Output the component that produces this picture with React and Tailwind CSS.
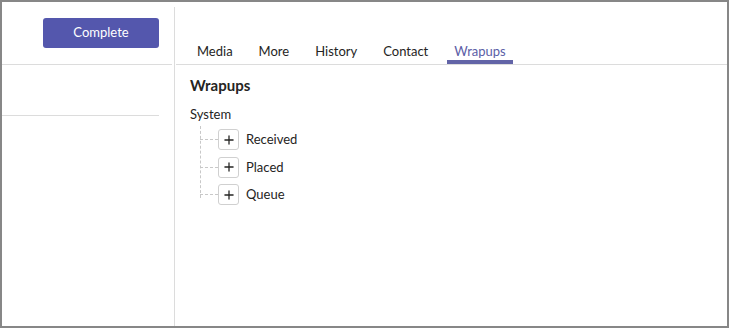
import { Plus } from "lucide-react"

const tabs = ["Media", "More", "History", "Contact", "Wrapups"]
const codes = ["Received", "Placed", "Queue"]

export default function App() {
  return (
    <div
      className="w-[729px] h-[328px] border-2 border-[#878787] bg-white flex text-[#252423]"
      style={{ fontFamily: "Lato, 'Noto Sans', sans-serif" }}
    >
      {/* Left column */}
      <div className="w-[172px] flex flex-col">
        <div className="h-[63px] flex justify-end items-start pt-[16px] pr-[13px] border-b border-[#dcdcdc] mr-[2px]">
          <button className="w-[116px] h-[30px] rounded-[3px] bg-[#5457ad] text-white text-[13px]">
            Complete
          </button>
        </div>
        <div className="h-[51px] border-b border-[#dcdcdc] mr-[15px]" />
      </div>

      {/* Divider */}
      <div className="w-px bg-[#dcdcdc] mt-[5px]" />

      {/* Right column */}
      <div className="flex-1 flex flex-col">
        <div className="h-[63px] ml-px border-b border-[#dcdcdc] flex items-end pl-[14px] gap-[12px]">
          {tabs.map((t) => {
            const active = t === "Wrapups"
            return (
              <div key={t} className="flex flex-col items-stretch">
                <span className={`px-[7px] text-[13px] leading-[18px] ${active ? "text-[#5b5ea6]" : "text-[#252423]"}`}>{t}</span>
                <span className={`mt-[0px] h-[4px] ${active ? "bg-[#6264a7]" : "bg-transparent"}`} />
              </div>
            )
          })}
        </div>

        <div className="pl-[15px] pt-[10px]">
          <h2 className="text-[15px] font-bold leading-[20px]">Wrapups</h2>
          <div className="mt-[10px] text-[13px] leading-[18px]">System</div>
          <div className="relative ml-[10px] mt-[3px]">
            <div className="absolute left-0 top-0 h-[72px] border-l border-dashed border-[#c8c8c8]" />
            {codes.map((c) => (
              <div key={c} className="h-[27.5px] flex items-center">
                <span className="w-[18px] border-t border-dashed border-[#c8c8c8]" />
                <span className="w-[21px] h-[21px] rounded-[3px] border border-[#d0d0d0] flex items-center justify-center">
                  <Plus size={14} strokeWidth={2.2} className="text-[#252423]" />
                </span>
                <span className="ml-[7px] text-[13px]">{c}</span>
              </div>
            ))}
          </div>
        </div>
      </div>
    </div>
  )
}
